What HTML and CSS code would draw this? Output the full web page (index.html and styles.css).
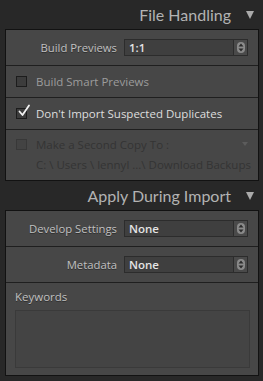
FILE: index.html
```html
<!DOCTYPE html>
<html>
<head>
<meta charset="utf-8">
<link rel="stylesheet" href="styles.css">
</head>
<body>
<div class="app">
  <div class="hdr"><span class="hdr-title">File Handling</span><span class="tri"></span></div>
  <div class="panel">
    <div class="row row-select">
      <span class="label">Build Previews</span>
      <div class="select"><span class="val">1:1</span><span class="spin"><svg width="8" height="11" viewBox="0 0 8 11"><path d="M4 1.5 L6.5 4.5 H1.5 Z M4 9.5 L6.5 6.5 H1.5 Z" fill="#2b2b2b"/></svg></span></div>
    </div>
    <div class="row row-check">
      <span class="cb"></span><span class="ctext">Build Smart Previews</span>
    </div>
    <div class="row row-check">
      <span class="cb checked"><svg class="tick" width="14" height="14" viewBox="0 0 14 14"><path d="M2.5 7.5 L5.5 11 L12 1.5" fill="none" stroke="#f2f2f2" stroke-width="1.8" stroke-linecap="round" stroke-linejoin="round"/></svg></span><span class="ctext bright">Don't Import Suspected Duplicates</span>
    </div>
    <div class="row row-copy">
      <div class="copy-line">
        <span class="cb dis"></span><span class="ctext dim">Make a Second Copy To :</span><span class="dtri"></span>
      </div>
      <div class="path dim">C: \ Users \ lennyl ...\ Download Backups</div>
    </div>
  </div>
  <div class="hdr"><span class="hdr-title">Apply During Import</span><span class="tri"></span></div>
  <div class="panel">
    <div class="row row-select">
      <span class="label">Develop Settings</span>
      <div class="select"><span class="val">None</span><span class="spin"><svg width="8" height="11" viewBox="0 0 8 11"><path d="M4 1.5 L6.5 4.5 H1.5 Z M4 9.5 L6.5 6.5 H1.5 Z" fill="#2b2b2b"/></svg></span></div>
    </div>
    <div class="row row-select">
      <span class="label">Metadata</span>
      <div class="select"><span class="val">None</span><span class="spin"><svg width="8" height="11" viewBox="0 0 8 11"><path d="M4 1.5 L6.5 4.5 H1.5 Z M4 9.5 L6.5 6.5 H1.5 Z" fill="#2b2b2b"/></svg></span></div>
    </div>
    <div class="row row-kw">
      <div class="kw-label">Keywords</div>
      <div class="kw-box"></div>
    </div>
  </div>
</div>
</body>
</html>
```
FILE: styles.css
```css
html, body {
  margin: 0;
  padding: 0;
  background: #282828;
}
.app {
  width: 263px;
  height: 381px;
  overflow: hidden;
  font-family: "Open Sans", "Noto Sans", sans-serif;
}
.hdr {
  height: 29px;
  display: flex;
  align-items: center;
  justify-content: flex-end;
  padding-right: 9px;
  box-sizing: border-box;
}
.hdr-title {
  font-family: Lato, "Open Sans", sans-serif;
  font-weight: 400;
  font-size: 16px;
  color: #b3b3b3;
  margin-right: 15px;
}
.tri {
  width: 0;
  height: 0;
  border-left: 4.5px solid transparent;
  border-right: 4.5px solid transparent;
  border-top: 8px solid #ababab;
}
.panel {
  margin: 0 4px 0 5px;
  border: 1px solid #121212;
  background: #474747;
}
.row {
  border-bottom: 1px solid #1f1f1f;
  display: flex;
  align-items: center;
  box-sizing: border-box;
}
.row:last-child {
  border-bottom: none;
}
.row-select {
  height: 36px;
}
.label {
  width: 111px;
  text-align: right;
  font-size: 11.3px;
  color: #c0c0c0;
  text-shadow: 0 1px 0 #2e2e2e;
  margin-right: 7px;
}
.select {
  width: 124px;
  height: 17px;
  border: 1px solid #2c2c2c;
  background: #3f3f3f;
  display: flex;
  align-items: center;
  box-sizing: border-box;
}
.val {
  flex: 1;
  padding-left: 4px;
  font-size: 11.5px;
  font-weight: 600;
  color: #e4e4e4;
}
.spin {
  width: 13px;
  height: 15px;
  border-left: 1px solid #2c2c2c;
  background: #4a4a4a;
  display: flex;
  align-items: center;
  justify-content: center;
}
.spin svg {
  background: #8a8a8a;
  border-radius: 4px;
}
.row-check {
  height: 32px;
  padding-left: 10px;
}
.cb {
  position: relative;
  width: 9px;
  height: 9px;
  border: 1px solid #1c1c1c;
  background: #3c3c3c;
  flex: none;
}
.cb.dis {
  border-color: #383838;
  background: #434343;
}
.tick {
  position: absolute;
  left: 0;
  top: -5px;
}
.ctext {
  margin-left: 9px;
  font-size: 11.5px;
  color: #9c9c9c;
}
.ctext.bright {
  color: #dedede;
}
.dim {
  color: #343434 !important;
}
.row-copy {
  height: 50px;
  flex-direction: column;
  align-items: stretch;
  justify-content: flex-start;
  padding: 7px 0 0 10px;
}
.copy-line {
  display: flex;
  align-items: center;
  height: 14px;
}
.dtri {
  margin-left: auto;
  margin-right: 10px;
  width: 0;
  height: 0;
  border-left: 3.5px solid transparent;
  border-right: 3.5px solid transparent;
  border-top: 4px solid #5c5c5c;
}
.path {
  margin: 6px 0 0 20px;
  font-size: 11.5px;
  color: #343434;
}
.row-kw {
  flex-direction: column;
  align-items: stretch;
  padding: 6px 8px 7px 9px;
}
.kw-label {
  font-size: 11.5px;
  color: #c0c0c0;
  text-shadow: 0 1px 0 #2e2e2e;
  height: 21px;
  line-height: 16px;
}
.kw-box {
  height: 58px;
  border: 1px solid #3a3a3a;
  background: #444444;
  box-sizing: border-box;
}
```
